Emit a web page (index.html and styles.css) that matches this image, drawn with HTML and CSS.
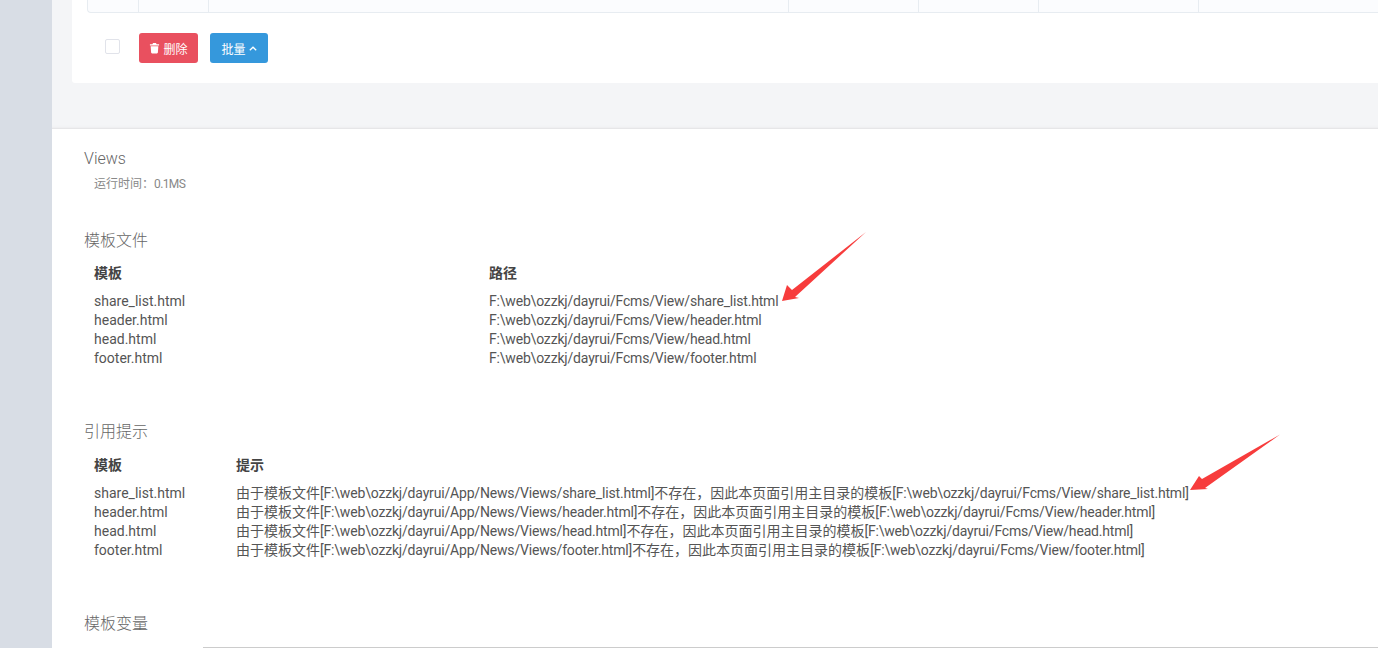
FILE: index.html
```html
<!DOCTYPE html>
<html>
  <head>
    <title>Views</title>
    <meta charset="UTF-8" />
    <link rel="stylesheet" href="styles.css">
  </head>
  <body>
    <div class="sidebar"></div>
    <div class="main">
      <div class="content">
        <div class="card">
          <div class="table-end">
            <div></div><div></div><div></div><div></div><div></div><div></div><div></div>
          </div>
          <div class="actions">
            <span class="check"></span>
            <button class="btn btn-red">
              <svg class="icon" viewBox="0 0 12 12"><path d="M4.4 0.6h3.2l0.7 1.4h2.7v1.3h-10v-1.3h2.7zM1.8 4h8.4l-0.5 7a1 1 0 0 1-1 0.9h-5.4a1 1 0 0 1-1-0.9z" fill="#fff"/></svg>
              删除
            </button>
            <button class="btn btn-blue">
              批量
              <svg class="chevron" viewBox="0 0 8 5"><path d="M0.8 4.2L4 1.2l3.2 3" fill="none" stroke="#fff" stroke-width="1.3"/></svg>
            </button>
          </div>
        </div>
      </div>

      <div class="trace">
        <h3 class="first">Views</h3>
        <p class="runtime">运行时间：<span class="time">0.1MS</span></p>

        <h3 class="files-title">模板文件</h3>
        <table class="files">
          <tr><th>模板</th><th>路径</th></tr>
          <tr><td>share_list.html</td><td class="path">F:\web\ozzkj/dayrui/Fcms/View/share_list.html</td></tr>
          <tr><td>header.html</td><td class="path">F:\web\ozzkj/dayrui/Fcms/View/header.html</td></tr>
          <tr><td>head.html</td><td class="path">F:\web\ozzkj/dayrui/Fcms/View/head.html</td></tr>
          <tr><td>footer.html</td><td class="path">F:\web\ozzkj/dayrui/Fcms/View/footer.html</td></tr>
        </table>

        <h3 class="tips-title">引用提示</h3>
        <table class="tips">
          <tr><th>模板</th><th>提示</th></tr>
          <tr><td>share_list.html</td><td>由于模板文件<span class="path">[F:\web\ozzkj/dayrui/App/News/Views/share_list.html]</span>不存在，因此本页面引用主目录的模板<span class="path">[F:\web\ozzkj/dayrui/Fcms/View/share_list.html]</span></td></tr>
          <tr><td>header.html</td><td>由于模板文件<span class="path">[F:\web\ozzkj/dayrui/App/News/Views/header.html]</span>不存在，因此本页面引用主目录的模板<span class="path">[F:\web\ozzkj/dayrui/Fcms/View/header.html]</span></td></tr>
          <tr><td>head.html</td><td>由于模板文件<span class="path">[F:\web\ozzkj/dayrui/App/News/Views/head.html]</span>不存在，因此本页面引用主目录的模板<span class="path">[F:\web\ozzkj/dayrui/Fcms/View/head.html]</span></td></tr>
          <tr><td>footer.html</td><td>由于模板文件<span class="path">[F:\web\ozzkj/dayrui/App/News/Views/footer.html]</span>不存在，因此本页面引用主目录的模板<span class="path">[F:\web\ozzkj/dayrui/Fcms/View/footer.html]</span></td></tr>
        </table>

        <h3 class="vars-title">模板变量</h3>
        <div class="vars-line"></div>
      </div>
    </div>

    <!-- red annotation arrows drawn over the page -->
    <svg class="arrows" width="1378" height="648" viewBox="0 0 1378 648">
      <path d="M866 232L795 297L799 298L782 301L787 285L792 290Z" fill="#f73c3c"/>
      <path d="M1280 434.5L1205 488L1208 489L1190 490L1199 476L1202 479Z" fill="#f73c3c"/>
    </svg>
  </body>
</html>
```

FILE: styles.css
```css
body {
  font-family: Roboto, "Noto Sans CJK SC", sans-serif;
  font-size: 14px;
  color: #555;
  margin: 0;
  height: 648px;
  overflow: hidden;
  display: flex;
  background: #fff;
}

.sidebar {
  width: 52px;
  flex: none;
  background: #d8dde5;
}

.main {
  flex: 1;
  min-width: 0;
}

.content {
  height: 128px;
  padding-left: 20px;
  background: #f4f5f7;
  border-bottom: 1px solid #e6e6e8;
  box-shadow: inset 0 -3px 3px -3px #e4e4e6;
}

.card {
  height: 83px;
  background: #fff;
  padding-left: 15px;
  border-bottom-left-radius: 3px;
}

.table-end {
  display: grid;
  grid-template-columns: 51px 70px 580px 130px 120px 160px 1fr;
  height: 12px;
  background: #fbfcfe;
  border-bottom: 1px solid #e7ecf1;
  border-left: 1px solid #e7ecf1;
  border-bottom-left-radius: 4px;
}

.table-end div {
  border-right: 1px solid #e7ecf1;
}

.table-end div:last-child {
  border-right: 0;
}

.actions {
  display: flex;
  align-items: flex-start;
  padding: 20px 0 0 18px;
}

.check {
  width: 13px;
  height: 13px;
  margin: 6px 19px 0 0;
  border: 1px solid #e1e3ea;
  border-radius: 2px;
}

.btn {
  height: 30px;
  border: 0;
  border-radius: 3px;
  color: #fff;
  font-family: inherit;
  font-size: 12px;
  padding: 0;
  display: flex;
  align-items: center;
  justify-content: center;
  gap: 3px;
}

.btn-red {
  width: 59px;
  margin-right: 12px;
  background: #e9505f;
}

.btn-blue {
  width: 58px;
  background: #3598dc;
}

.icon {
  width: 11px;
  height: 12px;
}

.chevron {
  width: 8px;
  height: 5px;
}

.trace {
  padding-left: 32px;
}

h3 {
  font-size: 16px;
  font-weight: 300;
  line-height: 22px;
  color: #666;
  margin: 0;
}

.first {
  margin-top: 19px;
}

.runtime {
  font-size: 12px;
  line-height: 17px;
  color: #888;
  margin: 6px 0 0 10px;
}

.time {
  letter-spacing: -0.6px;
}

.path {
  letter-spacing: -0.18px;
}

.files-title {
  margin-top: 37px;
}

.tips-title {
  margin-top: 53px;
}

.vars-title {
  margin-top: 53px;
}

table {
  border-collapse: collapse;
  margin-top: 12px;
}

.tips {
  margin-top: 13px;
}

th {
  font-weight: 700;
  text-align: left;
  color: #444;
  padding: 0 0 9px 10px;
  line-height: 19px;
}

td {
  padding: 0 0 0 10px;
  line-height: 19px;
  white-space: nowrap;
}

.files td:first-child,
.files th:first-child {
  width: 385px;
}

.tips td:first-child,
.tips th:first-child {
  width: 132px;
}

.vars-line {
  height: 1px;
  margin: 12px 0 0 119px;
  background: #ccc;
}

.arrows {
  position: absolute;
  left: 0;
  top: 0;
}
```
